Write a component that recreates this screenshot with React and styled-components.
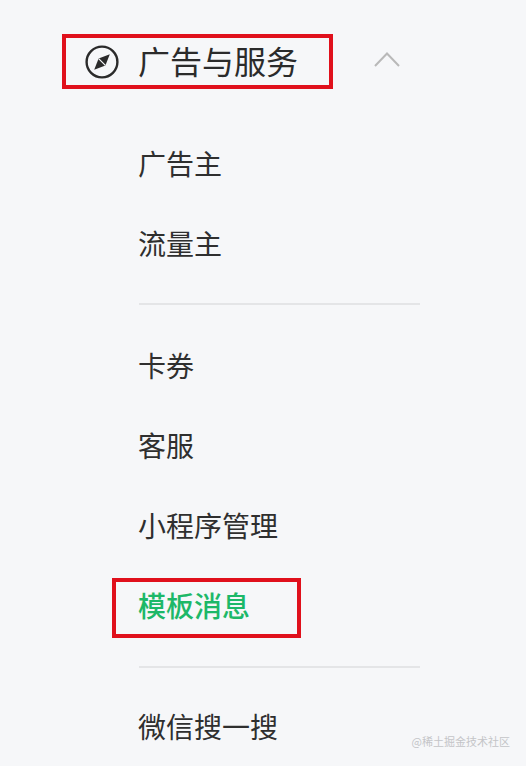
import React from "react";
import styled, { createGlobalStyle } from "styled-components";

const GlobalStyle = createGlobalStyle`
  html, body {
    margin: 0;
    padding: 0;
    background: #f6f7f9;
  }
  body {
    font-family: "Noto Sans CJK SC", "Liberation Sans", sans-serif;
    overflow: hidden;
  }
`;

const groups = [
  [{ label: "广告主" }, { label: "流量主" }],
  [
    { label: "卡券" },
    { label: "客服" },
    { label: "小程序管理" },
    { label: "模板消息", active: true },
  ],
  [{ label: "微信搜一搜" }],
];

function App() {
  return (
    <Page>
      <GlobalStyle />
      <Header>
        <HeaderBox>
          <CompassIcon />
          <HeaderTitle>广告与服务</HeaderTitle>
        </HeaderBox>
        <Chevron />
      </Header>
      <Menu>
        {groups.map((items, i) => (
          <Group key={i}>
            {items.map((item) => (
              <Item key={item.label} $active={item.active}>
                {item.active && <Highlight />}
                <ItemLabel>{item.label}</ItemLabel>
              </Item>
            ))}
          </Group>
        ))}
      </Menu>
      <Watermark>@稀土掘金技术社区</Watermark>
    </Page>
  );
}

function CompassIcon() {
  return (
    <svg width="34" height="34" viewBox="0 0 34 34">
      <circle cx="17" cy="17" r="15.4" fill="none" stroke="#2b2b2b" strokeWidth="2.4" />
      <path d="M24.8 9.2 L20.4 20.4 L13.6 13.6 Z" fill="#2b2b2b" />
      <path d="M9.2 24.8 L13.6 13.6 L20.4 20.4 Z" fill="#2b2b2b" />
      <path d="M13.6 13.6 L20.4 20.4" stroke="#f6f7f9" strokeWidth="1.2" />
    </svg>
  );
}

function Chevron() {
  return (
    <ChevronIcon width="28" height="18" viewBox="0 0 28 18">
      <path d="M2 15 L14 2.5 L26 15" fill="none" stroke="#b9b9b9" strokeWidth="2" />
    </ChevronIcon>
  );
}

const Page = styled.div`
  position: relative;
  width: 526px;
  height: 766px;
  overflow: hidden;
  background: #f6f7f9;
  box-sizing: border-box;
  padding: 34px 0 0 62px;
`;

const Header = styled.header`
  display: flex;
  align-items: center;
  height: 55px;
`;

const HeaderBox = styled.div`
  box-sizing: border-box;
  display: flex;
  align-items: center;
  gap: 19px;
  width: 271px;
  height: 55px;
  padding-left: 19px;
  border: 4px solid #e0101c;
`;

const HeaderTitle = styled.span`
  font-size: 32px;
  line-height: 1;
  padding-bottom: 4px;
  color: #2b2b2b;
`;

const ChevronIcon = styled.svg`
  flex: none;
  margin: -3px 0 0 40px;
`;

const Menu = styled.nav`
  margin: 34px 0 0 77px;
  width: 281px;
`;

const Group = styled.div`
  padding-bottom: 20px;
  margin-bottom: 20px;
  border-bottom: 2px solid #e4e5e7;

  &:nth-child(2) {
    padding-bottom: 21px;
    margin-bottom: 18px;
  }

  &:last-child {
    border-bottom: none;
    margin-bottom: 0;
  }
`;

const Item = styled.div`
  position: relative;
  height: 80px;
  display: flex;
  align-items: center;
  font-size: 28px;
  line-height: 1;
  color: ${(props) => (props.$active ? "#1db868" : "#2f2f2f")};
  font-weight: ${(props) => (props.$active ? 500 : 400)};
`;

const ItemLabel = styled.span`
  margin-left: -1px;
`;

const Highlight = styled.span`
  position: absolute;
  left: -27px;
  top: 13px;
  width: 189px;
  height: 60px;
  box-sizing: border-box;
  border: 4px solid #e0101c;
`;

const Watermark = styled.div`
  position: absolute;
  right: 16px;
  bottom: 17px;
  font-size: 11px;
  line-height: 16px;
  color: #c4c5c8;
`;

export default App;
